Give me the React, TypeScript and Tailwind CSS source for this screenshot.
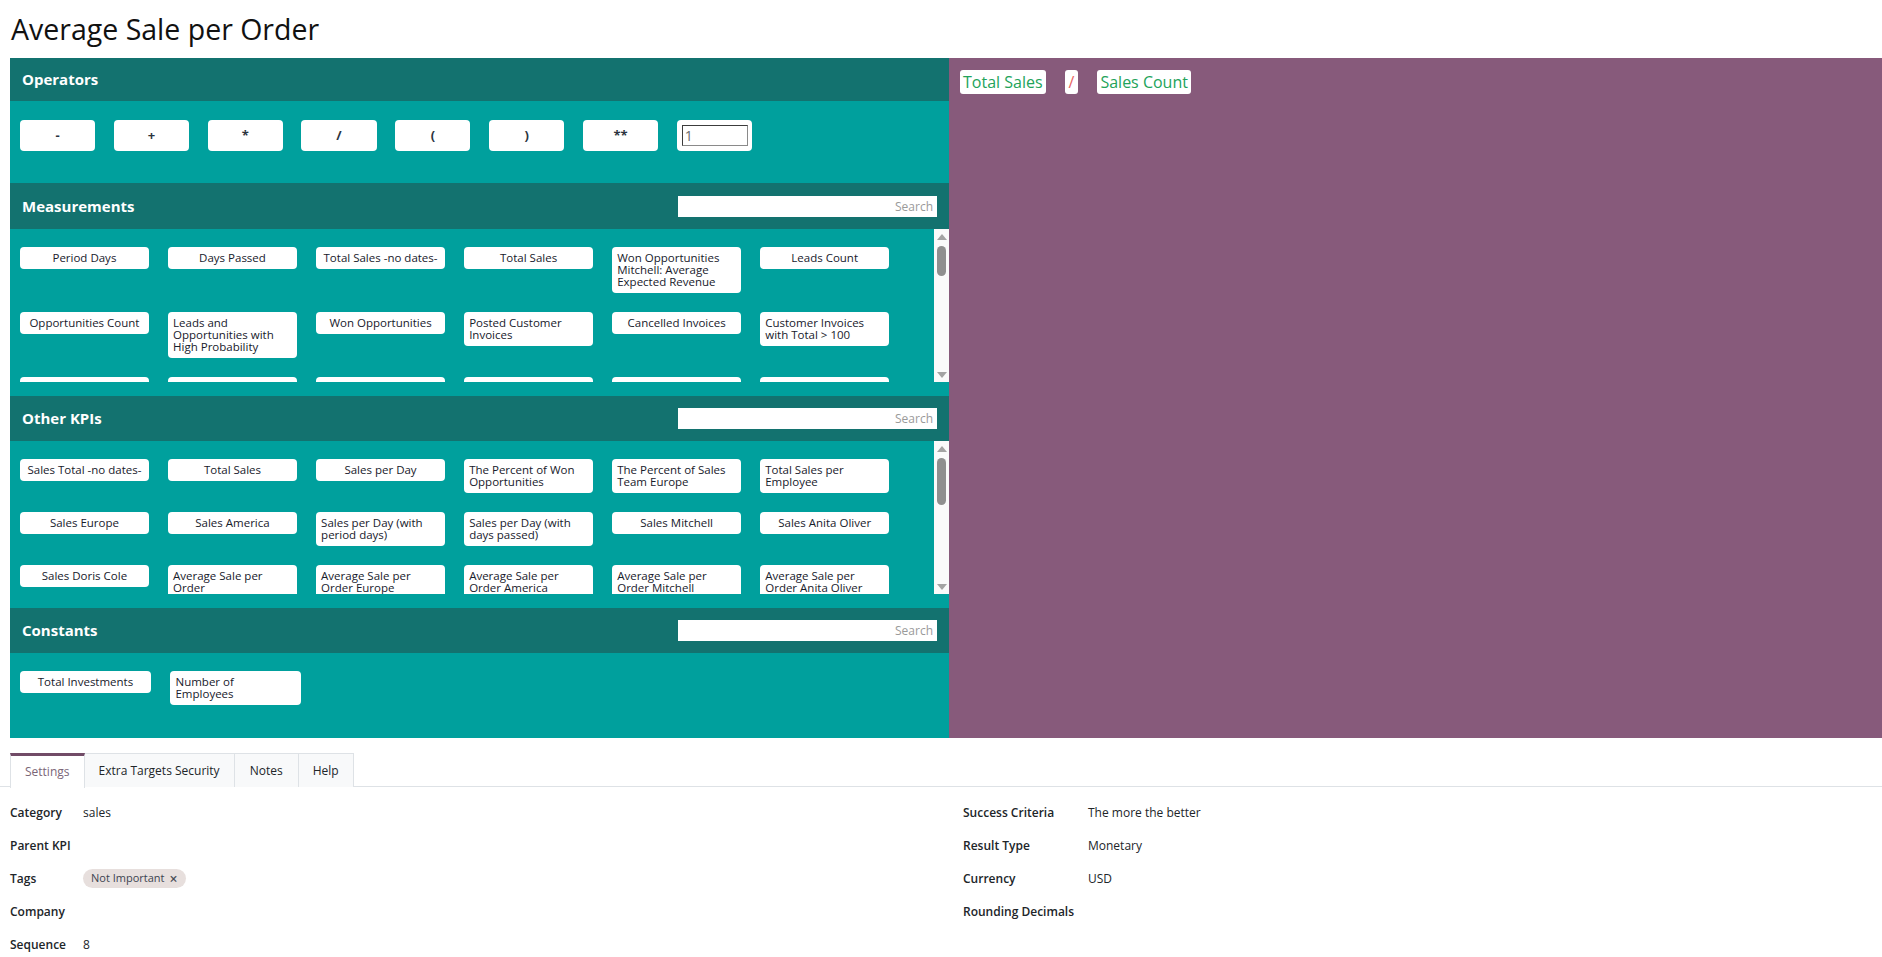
import React from 'react'

// ── data ─────────────────────────────────────────────────────────────────────
const operators = ['-', '+', '*', '/', '(', ')', '**']

const measurements = [
  'Period Days', 'Days Passed', 'Total Sales -no dates-', 'Total Sales',
  'Won Opportunities Mitchell: Average Expected Revenue', 'Leads Count',
  'Opportunities Count', 'Leads and Opportunities with High Probability', 'Won Opportunities',
  'Posted Customer Invoices', 'Cancelled Invoices', 'Customer Invoices with Total > 100',
  'Sales Count', 'Expected Revenue', 'Lost Opportunities', 'Refunds Count',
  'Unpaid Invoices', 'Overdue Invoices',
]

const otherKpis = [
  'Sales Total -no dates-', 'Total Sales', 'Sales per Day', 'The Percent of Won Opportunities',
  'The Percent of Sales Team Europe', 'Total Sales per Employee',
  'Sales Europe', 'Sales America', 'Sales per Day (with period days)',
  'Sales per Day (with days passed)', 'Sales Mitchell', 'Sales Anita Oliver',
  'Sales Doris Cole', 'Average Sale per Order', 'Average Sale per Order Europe',
  'Average Sale per Order America', 'Average Sale per Order Mitchell', 'Average Sale per Order Anita Oliver',
]

const constants = ['Total Investments', 'Number of\nEmployees']

// ── pieces ───────────────────────────────────────────────────────────────────
function SectionHeader({ title, search }: { title: string; search?: boolean }) {
  return (
    <div className="h-[45px] bg-[#13726f] flex items-center justify-between pl-[12px] pr-[12px]">
      <span className="text-white font-bold text-[15px] leading-none">{title}</span>
      {search && (
        <div className="w-[259px] h-[21px] bg-white flex items-center justify-end pr-[4px] text-[12px] text-[#9a9a9a]">
          Search
        </div>
      )}
    </div>
  )
}

function Chip({ label }: { label: string }) {
  // labels with a hard break fill the box, so they sit on the left
  const broken = label.includes('\n')
  return (
    <div className="w-[14.1%] mr-[2.1%] bg-white rounded-[4px] px-[5px] py-[5px] text-center text-[11.5px] leading-[12px] text-[#17202b]">
      <span className={broken ? 'block w-full text-left whitespace-pre-line' : 'inline-block text-left'}>{label}</span>
    </div>
  )
}

function ChipList({ items, minH }: { items: string[]; minH?: string }) {
  return (
    <div className={`flex flex-wrap items-start content-start gap-y-[19px] pl-[10px] pt-[18px] ${minH ?? ''}`}>
      {items.map((t, i) => <Chip key={i} label={t} />)}
    </div>
  )
}

function FakeScrollbar({ size }: { size: number }) {
  return (
    <div className="w-[15px] h-full bg-[#fafafa] flex flex-col items-center shrink-0">
      <div className="h-[15px] flex items-center justify-center">
        <div className="w-0 h-0 border-l-[5px] border-r-[5px] border-b-[6px] border-l-transparent border-r-transparent border-b-[#a3a3a3]" />
      </div>
      <div className="flex-1 w-full px-[3px] pt-[2px]">
        <div className="w-full rounded-full bg-[#8f8f8f]" style={{ height: size }} />
      </div>
      <div className="h-[15px] flex items-center justify-center">
        <div className="w-0 h-0 border-l-[5px] border-r-[5px] border-t-[6px] border-l-transparent border-r-transparent border-t-[#a3a3a3]" />
      </div>
    </div>
  )
}

function ScrollSection({ items, thumb, minH, pb }: { items: string[]; thumb: number; minH?: string; pb: string }) {
  return (
    <div className={`bg-[#00a09d] ${pb}`}>
      <div className="h-[153px] flex">
        <div className="flex-1 overflow-hidden">
          <ChipList items={items} minH={minH} />
        </div>
        <FakeScrollbar size={thumb} />
      </div>
    </div>
  )
}

function Field({ label, children, w }: { label: string; children?: React.ReactNode; w: string }) {
  return (
    <div className="h-[33px] flex items-center">
      <span className={`${w} shrink-0 text-[12px] font-semibold text-[#212529]`}>{label}</span>
      <div className="text-[12px] text-[#212529]">{children}</div>
    </div>
  )
}

// ── page ─────────────────────────────────────────────────────────────────────
export default function App() {
  return (
    <div className="w-[1882px] min-h-[957px] bg-white font-['Open_Sans',sans-serif] text-[#212529]">
      <h1 className="h-[58px] flex items-center pl-[11px] text-[28.5px] text-[#111] font-normal">Average Sale per Order</h1>

      <div className="flex h-[680px] pl-[10px]">
        {/* building blocks */}
        <div className="w-[939px] shrink-0 flex flex-col">
          <div className="h-[43px] bg-[#13726f] flex items-center pl-[12px]">
            <span className="text-white font-bold text-[15px] leading-none">Operators</span>
          </div>
          <div className="h-[82px] bg-[#00a09d] flex items-start pl-[10px] pt-[19px]">
            {operators.map((op) => (
              <div key={op} className="w-[8.1%] mr-[2%] h-[31px] bg-white rounded-[4px] flex items-center justify-center text-[13px] font-bold text-[#2b3440]">
                {op}
              </div>
            ))}
            <div className="w-[8.1%] h-[31px] bg-white rounded-[4px] flex items-center pl-[5px] pr-[4px]">
              <div className="w-full h-[21px] border border-[#3c3c3c] border-r-[#8a8a8a] border-b-[#8a8a8a] flex items-center px-[2px] text-[14px] text-[#6b6b6b]">1</div>
            </div>
          </div>

          <div className="h-px bg-[#13726f]" />
          <SectionHeader title="Measurements" search />
          <ScrollSection items={measurements} thumb={30} minH="min-h-[620px]" pb="pb-[14px]" />

          <SectionHeader title="Other KPIs" search />
          <ScrollSection items={otherKpis} thumb={47} pb="pb-[14px]" />

          <SectionHeader title="Constants" search />
          <div className="flex-1 bg-[#00a09d]">
            <ChipList items={constants} />
          </div>
        </div>

        {/* formula */}
        <div className="flex-1 bg-[#875a7b] flex items-start gap-[19px] pl-[11px] pt-[12px]">
          <span className="h-[24px] bg-white rounded-[3px] px-[3px] flex items-center text-[16px] text-[#22a35a]">Total Sales</span>
          <span className="h-[24px] bg-white rounded-[3px] px-[4px] flex items-center text-[16px] text-[#e9645f]">/</span>
          <span className="h-[24px] bg-white rounded-[3px] px-[3px] flex items-center text-[16px] text-[#22a35a]">Sales Count</span>
        </div>
      </div>

      {/* notebook */}
      <div className="mt-[15px] border-b border-[#dee2e6] flex pl-[10px] h-[34px] text-[12px]">
        <div className="h-[35px] px-[14px] flex items-center bg-white border-t-[3px] border-t-[#714b67] border-x border-x-[#dee2e6] text-[#7b6577]">Settings</div>
        <div className="h-[34px] px-[14px] flex items-center bg-[#f8f9fa] border-t border-r border-[#dee2e6]">Extra Targets Security</div>
        <div className="h-[34px] px-[15px] flex items-center bg-[#f8f9fa] border-t border-r border-[#dee2e6]">Notes</div>
        <div className="h-[34px] px-[14px] flex items-center bg-[#f8f9fa] border-t border-r border-[#dee2e6]">Help</div>
      </div>

      <div className="grid grid-cols-2 px-[10px] mt-[9px]">
        <div className="flex flex-col">
          <Field label="Category" w="w-[73px]">sales</Field>
          <Field label="Parent KPI" w="w-[73px]" />
          <Field label="Tags" w="w-[73px]">
            <span className="inline-flex items-center gap-[5px] h-[19px] rounded-full bg-[#e7dfdd] pl-[8px] pr-[8px] text-[11px] text-[#3c4450]">
              Not Important <span className="text-[14px] leading-none font-semibold text-[#4b4f57]">×</span>
            </span>
          </Field>
          <Field label="Company" w="w-[73px]" />
          <Field label="Sequence" w="w-[73px]">8</Field>
        </div>
        <div className="flex flex-col pl-[22px]">
          <Field label="Success Criteria" w="w-[125px]">The more the better</Field>
          <Field label="Result Type" w="w-[125px]">Monetary</Field>
          <Field label="Currency" w="w-[125px]">USD</Field>
          <Field label="Rounding Decimals" w="w-[125px]" />
        </div>
      </div>
    </div>
  )
}
